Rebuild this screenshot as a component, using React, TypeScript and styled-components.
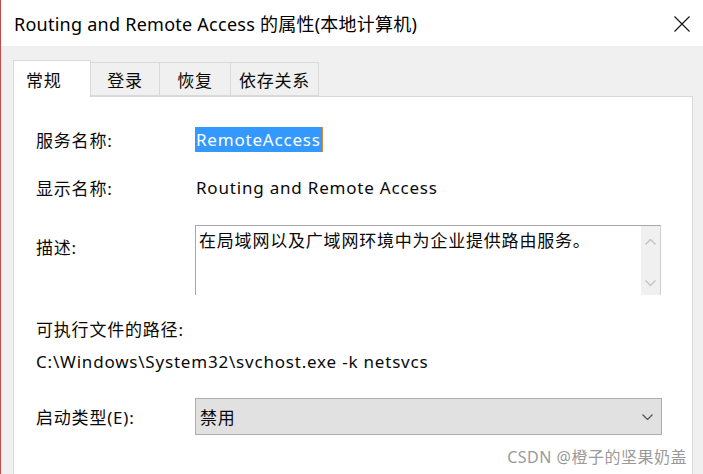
import React from "react";
import styled, { createGlobalStyle } from "styled-components";

const GlobalStyle = createGlobalStyle`
  html, body {
    margin: 0;
    padding: 0;
    background: #f0f0f0;
  }
  body {
    font-family: "Noto Sans", "Noto Sans CJK SC", sans-serif;
    color: #0a0a0a;
  }
`;

const Window = styled.div`
  position: relative;
  width: 703px;
  height: 474px;
  overflow: hidden;
  display: flex;
  flex-direction: column;
  background: #f0f0f0;
  border-left: 1px solid #c64a4a;
  box-sizing: border-box;
`;

const TitleBar = styled.div`
  height: 46px;
  flex: none;
  background: #fff;
  display: flex;
  align-items: center;
  justify-content: space-between;
  padding: 0 13px 0 13px;
  box-sizing: border-box;
`;

const Title = styled.div`
  font-size: 18px;
  color: #000;
  letter-spacing: 0.25px;
`;

const Close = styled.svg`
  width: 16px;
  height: 16px;
  margin-top: 1px;
`;

const Body = styled.div`
  flex: 1;
  display: flex;
  flex-direction: column;
  padding: 14px 10px 0 12px;
  min-height: 0;
`;

const TabStrip = styled.div`
  display: flex;
  align-items: flex-end;
  height: 37px;
  flex: none;
  position: relative;
  z-index: 1;
  margin-bottom: -1px;
`;

const Tab = styled.div<{ $active?: boolean; $width: number }>`
  box-sizing: border-box;
  width: ${(p) => p.$width}px;
  height: ${(p) => (p.$active ? 37 : 34)}px;
  padding: 0 ${(p) => (p.$active ? 12 : 0)}px;
  display: flex;
  align-items: center;
  justify-content: ${(p) => (p.$active ? "flex-start" : "center")};
  font-size: 17px;
  letter-spacing: 0.8px;
  background: ${(p) => (p.$active ? "#fff" : "#f0f0f0")};
  border: 1px solid #d9d9d9;
  border-bottom: ${(p) => (p.$active ? "none" : "1px solid #d9d9d9")};
  margin-left: -1px;
  margin-bottom: ${(p) => (p.$active ? 0 : 1)}px;
  &:first-child {
    margin-left: 0;
  }
`;

const Panel = styled.div`
  flex: 1;
  background: #fff;
  border: 1px solid #d9d9d9;
  border-bottom: none;
  padding: 30px 0 0 22px;
  display: flex;
  flex-direction: column;
  font-size: 17px;
  letter-spacing: 0.8px;
`;

const Row = styled.div<{ $top: number }>`
  display: flex;
  align-items: center;
  margin-top: ${(p) => p.$top}px;
  min-height: 25px;
`;

const TopRow = styled(Row)`
  align-items: flex-start;
`;

const Label = styled.div<{ $offset?: number }>`
  width: 159px;
  flex: none;
  padding-top: ${(p) => p.$offset ?? 0}px;
`;

const Selected = styled.span`
  background: #3399ff;
  color: #fff;
  height: 25px;
  line-height: 25px;
  padding: 0 1px 0 1px;
  border-right: 1px solid #e08a3a;
`;

const Value = styled.div`
  margin-left: 1px;
`;

const TextBox = styled.div`
  width: 466px;
  height: 70px;
  box-sizing: border-box;
  border-top: 1px solid #a8a8a8;
  border-left: 1px solid #a8a8a8;
  border-right: 1px solid #d0d0d0;
  display: flex;
`;

const TextContent = styled.div`
  flex: 1;
  padding: 2px 0 0 3px;
  line-height: 25px;
`;

const ScrollBar = styled.div`
  width: 19px;
  background: #f0f0f0;
  display: flex;
  flex-direction: column;
  justify-content: space-between;
  align-items: center;
  padding: 13px 0 9px;
  box-sizing: border-box;
`;

const Chevron = styled.svg`
  width: 11px;
  height: 6px;
`;

const Plain = styled.div<{ $top: number }>`
  margin-top: ${(p) => p.$top}px;
  line-height: 25px;
`;

const Combo = styled.div`
  width: 467px;
  height: 37px;
  box-sizing: border-box;
  background: #e1e1e1;
  border: 1px solid #adadad;
  display: flex;
  align-items: center;
  justify-content: space-between;
  padding: 0 8px 0 4px;
`;

const Watermark = styled.div`
  position: absolute;
  right: 16px;
  bottom: 6px;
  font-size: 16px;
  letter-spacing: 0.5px;
  color: #9a9a9a;
`;

const Down = ({ color = "#c2c2c2" }: { color?: string }) => (
  <Chevron viewBox="0 0 11 6">
    <path d="M0.5 0.5 L5.5 5.5 L10.5 0.5" fill="none" stroke={color} strokeWidth="1.3" />
  </Chevron>
);

const Up = () => (
  <Chevron viewBox="0 0 11 6">
    <path d="M0.5 5.5 L5.5 0.5 L10.5 5.5" fill="none" stroke="#c2c2c2" strokeWidth="1.3" />
  </Chevron>
);

const tabs = [
  { title: "常规", width: 78 },
  { title: "登录", width: 70 },
  { title: "恢复", width: 72 },
  { title: "依存关系", width: 89 },
];

export default function App() {
  return (
    <>
      <GlobalStyle />
      <Window>
        <TitleBar>
          <Title>Routing and Remote Access 的属性(本地计算机)</Title>
          <Close viewBox="0 0 16 16">
            <path d="M0.5 0.5 L15.5 15.5 M15.5 0.5 L0.5 15.5" stroke="#111" strokeWidth="1.1" />
          </Close>
        </TitleBar>
        <Body>
          <TabStrip>
            {tabs.map((t, i) => (
              <Tab key={t.title} $active={i === 0} $width={t.width}>
                {t.title}
              </Tab>
            ))}
          </TabStrip>
          <Panel>
            <Row $top={0}>
              <Label>服务名称:</Label>
              <Selected>RemoteAccess</Selected>
            </Row>
            <Row $top={23}>
              <Label>显示名称:</Label>
              <Value>Routing and Remote Access</Value>
            </Row>
            <TopRow $top={25}>
              <Label $offset={9}>描述:</Label>
              <TextBox>
                <TextContent>在局域网以及广域网环境中为企业提供路由服务。</TextContent>
                <ScrollBar>
                  <Up />
                  <Down />
                </ScrollBar>
              </TextBox>
            </TopRow>
            <Plain $top={22}>可执行文件的路径:</Plain>
            <Plain $top={7}>C:\Windows\System32\svchost.exe -k netsvcs</Plain>
            <Row $top={24}>
              <Label>启动类型(E):</Label>
              <Combo>
                <span>禁用</span>
                <Down color="#555" />
              </Combo>
            </Row>
          </Panel>
        </Body>
        <Watermark>CSDN @橙子的坚果奶盖</Watermark>
      </Window>
    </>
  );
}
